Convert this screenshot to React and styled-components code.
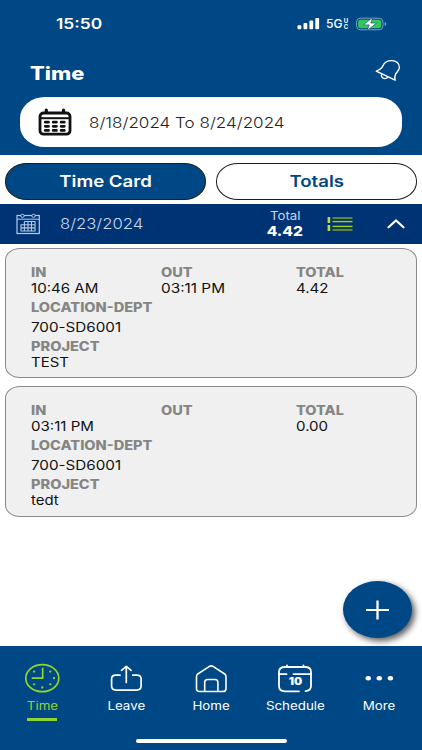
import React from "react";
import styled, { createGlobalStyle } from "styled-components";

// Time entries for the open day
const entries = [
  { in: "10:46 AM", out: "03:11 PM", total: "4.42", location: "700-SD6001", project: "TEST" },
  { in: "03:11 PM", out: "", total: "0.00", location: "700-SD6001", project: "tedt" },
];

const colors = {
  blue: "#004785",
  navy: "#003374",
  green: "#8fd431",
  label: "#858585",
};

const GlobalStyle = createGlobalStyle`
  * {
    box-sizing: border-box;
  }

  body {
    margin: 0;
    background: #fff;
    font-family: Inter, "Liberation Sans", sans-serif;
  }

  button {
    font-family: inherit;
    border: none;
    padding: 0;
    background: none;
    cursor: pointer;
  }

  svg {
    display: block;
    flex: none;
  }
`;

// Styled components
const Screen = styled.div`
  display: flex;
  flex-direction: column;
  width: 422px;
  height: 750px;
  overflow: hidden;
`;

// Wide lettering, used for every text on the screen
const Wide = styled.span`
  display: block;
  white-space: nowrap;
  transform: scaleX(${(props) => props.$wide || 1.2});
  transform-origin: ${(props) => props.$origin || "left"} center;
`;

const Header = styled.header`
  height: 155px;
  background: ${colors.blue};
  color: #fff;
`;

const StatusBar = styled.div`
  display: flex;
  align-items: center;
  justify-content: space-between;
  height: 47px;
  padding: 0 35px 0 56px;
`;

const Clock = styled(Wide)`
  font-size: 14.5px;
  font-weight: 600;
  line-height: 18px;
`;

const StatusIcons = styled.div`
  display: flex;
  align-items: center;
`;

const Network = styled.div`
  display: flex;
  align-items: center;
  width: 24px;
  margin: 1px 6px 0;
  font-size: 11.5px;
  font-weight: 500;
`;

const NetworkSub = styled.div`
  display: flex;
  flex-direction: column;
  margin-left: 2px;
  font-size: 6px;
  font-weight: 700;
  line-height: 6px;
`;

const TitleRow = styled.div`
  display: flex;
  justify-content: space-between;
  height: 50px;
  padding: 12px 21px 0 30px;
`;

const Title = styled(Wide)`
  font-size: 18.5px;
  font-weight: 800;
  line-height: 28px;
`;

const DateRange = styled.div`
  display: flex;
  align-items: center;
  height: 50px;
  margin: 0 20px;
  padding-left: 18px;
  border-radius: 25px / 21px;
  background: #fff;
  color: #222;
  font-size: 14.5px;
  font-weight: 300;

  svg {
    margin-right: 17px;
  }
`;

const Tabs = styled.div`
  display: grid;
  grid-template-columns: 1fr 1fr;
  gap: 10px;
  height: 49px;
  padding: 8px 5px 4px;
`;

const Tab = styled.button`
  display: flex;
  align-items: center;
  justify-content: center;
  border: 1px solid #1c1c1c;
  border-radius: 22px / 18px;
  background: ${(props) => (props.$active ? colors.blue : "#fff")};
  color: ${(props) => (props.$active ? "#fff" : colors.blue)};
  font-size: 15.5px;
  font-weight: 600;
`;

const DayBar = styled.div`
  display: flex;
  align-items: center;
  height: 40px;
  padding: 0 17px 0 16px;
  background: ${colors.navy};
  color: #c9d8f0;
`;

const DayDate = styled(Wide)`
  width: 195px;
  margin-left: 20px;
  padding-bottom: 2px;
  font-size: 14.5px;
  font-weight: 300;
`;

const DayTotal = styled.div`
  display: flex;
  flex-direction: column;
  align-items: center;
  width: 60px;
  margin-right: 12px;
  font-size: 11.5px;
  line-height: 15px;

  strong {
    color: #fff;
    font-size: 13.5px;
    font-weight: 800;
  }
`;

const ListButton = styled.button`
  margin-right: auto;
`;

const Entries = styled.main`
  display: flex;
  flex: 1;
  flex-direction: column;
  gap: 8px;
  padding: 4px 5px;
`;

const Card = styled.section`
  height: 130.3px;
  padding: 15.5px 0 0 24.5px;
  border: 1px solid #8b8b8b;
  border-radius: 15px / 12px;
  background: #f0f0f0;
  color: #111;
  font-size: 13px;
  line-height: 16px;
`;

const CardRow = styled.div`
  display: grid;
  grid-template-columns: 130px 135px 1fr;
  height: ${(props) => props.$height}px;
`;

const Label = styled(Wide)`
  height: 15.5px;
  color: ${colors.label};
  font-size: 12.5px;
  font-weight: 800;
  line-height: 15.5px;
`;

const Value = styled(Wide)`
  padding-top: ${(props) => (props.$spaced ? 4 : 0)}px;
`;

const AddButton = styled.button`
  position: absolute;
  left: 343px;
  top: 581px;
  display: flex;
  align-items: center;
  justify-content: center;
  width: 69px;
  height: 57px;
  border-radius: 50%;
  background: ${colors.blue};
  box-shadow: 3px 3px 6px rgba(0, 0, 0, 0.65);
`;

const BottomBar = styled.footer`
  display: flex;
  flex-direction: column;
  align-items: center;
  height: 104px;
  background: ${colors.blue};
`;

const Nav = styled.nav`
  display: grid;
  grid-template-columns: repeat(5, 84.3px);
  width: 422px;
  height: 92px;
`;

const NavItem = styled.button`
  display: flex;
  flex-direction: column;
  align-items: center;
  padding-top: 16px;
  color: ${(props) => (props.$active ? colors.green : "#fff")};
  font-size: 11.5px;
  line-height: 16px;

  &::after {
    content: "";
    flex: none;
    width: 30px;
    height: 3px;
    margin-top: 4.5px;
    background: ${(props) => (props.$active ? colors.green : "transparent")};
  }
`;

const NavLabel = styled(Wide)`
  margin-top: 3.5px;
`;

const HomeIndicator = styled.div`
  width: 151px;
  height: 4px;
  margin-top: 1px;
  border-radius: 2px;
  background: #fff;
`;

// Icons
const SignalIcon = () => (
  <svg width="23" height="12" viewBox="0 0 23 12" fill="#fff">
    <rect x="0.5" y="7.3" width="3.8" height="3.9" rx="1" />
    <rect x="6.5" y="5" width="3.8" height="6.2" rx="1" />
    <rect x="12.4" y="2.5" width="3.8" height="8.7" rx="1" />
    <rect x="18.3" y="0" width="3.8" height="11.2" rx="1" />
  </svg>
);

const BatteryIcon = () => (
  <svg width="31" height="14" viewBox="0 0 31 14">
    <rect x="0.5" y="1.2" width="26.5" height="11.6" rx="4" fill="none" stroke="#7aa0c4" />
    <rect x="2.1" y="2.7" width="23.2" height="8.6" rx="2.7" fill="#35c759" />
    <path d="M28.6 5v4c1.2-.4 1.6-1 1.6-2s-.4-1.6-1.6-2z" fill="#7aa0c4" />
    <path d="M16.6.6 7.4 7.9h5.8l-2 5.6 9.4-7.4h-5.7z" fill="#fff" stroke={colors.blue} strokeWidth="0.6" />
  </svg>
);

const BellIcon = () => (
  <svg width="26" height="23" viewBox="0 0 26 23" fill="none" stroke="#fff" strokeWidth="1.4" strokeLinejoin="round">
    <path d="M1.2 12.2C5 10.6 6.9 9.4 7.8 7 9.2 3.500 12.800 1.600 16.800 1.600c4.500 0 7.700 3 7.600 7-.1 2.700-2.500 4.300-3.800 6.600-.9 1.700-1 3.600-.5 6z" />
    <path d="M6.600 15.200c-.6 2.300.6 4.300 3 4.400 1.600 0 2.700-.7 3.300-1.900" />
  </svg>
);

const CalendarIcon = () => (
  <svg width="34" height="28" viewBox="0 0 34 28">
    <path d="M8.3 2v4M25.5 2v4" stroke="#111" strokeWidth="3.2" strokeLinecap="round" />
    <rect x="2" y="5" width="30" height="21.2" rx="3.5" fill="#fff" stroke="#111" strokeWidth="2.8" />
    <path d="M2 10.2h30" stroke="#111" strokeWidth="2" />
    <g stroke="#111" strokeWidth="2.8" strokeLinecap="round">
      <path d="M7.3 14.2h3.2M15.2 14.2h3.2M23.1 14.2h3.2" />
      <path d="M7.3 18.3h3.2M15.2 18.3h3.2M23.1 18.3h3.2" />
      <path d="M7.3 22.4h3.2M15.2 22.4h3.2M23.1 22.4h3.2" />
    </g>
  </svg>
);

const DayIcon = () => (
  <svg width="24" height="22" viewBox="0 0 24 22" fill="none" stroke="#b5c9e6">
    <rect x="1" y="2.5" width="22.3" height="18" strokeWidth="1.2" />
    <path d="M1 6.2h22" />
    <ellipse cx="6.5" cy="2.8" rx="1.7" ry="1.6" fill={colors.navy} />
    <ellipse cx="17.500" cy="2.8" rx="1.7" ry="1.6" fill={colors.navy} />
    <path d="M8.4 8.5H19V18H5v-6.300h14M5 14.900h14M8.400 8.500V18M12 8.500V18M15.500 8.500V18" strokeWidth="1.1" />
  </svg>
);

const ListIcon = () => (
  <svg width="26" height="16" viewBox="0 0 26 16" fill="none">
    <path d="M5.5 3.9h20M5.5 12.2h20" stroke="#174431" strokeWidth="3" />
    <path d="M5.5 2h20M5.5 5.7h20M5.5 10.3h20M5.5 14h20" stroke="#a5cf2c" strokeWidth="1.2" />
    <path d="M1.9 1v6M1.9 9v6" stroke="#c3d93a" strokeWidth="2.6" />
  </svg>
);

const ChevronIcon = () => (
  <svg width="18" height="10" viewBox="0 0 18 10" fill="none" stroke="#fff" strokeWidth="2.2" strokeLinecap="round">
    <path d="m1.5 8.2 7.500-6.700 7.500 6.700" />
  </svg>
);

const PlusIcon = () => (
  <svg width="24" height="20" viewBox="0 0 24 20" stroke="#fff">
    <path d="M0 10h23" strokeWidth="2" />
    <path d="M11.500.5v19" strokeWidth="2.3" />
  </svg>
);

const TimeIcon = () => (
  <svg width="36" height="32" viewBox="0 0 36 32" fill="none" stroke={colors.green} strokeWidth="1.7">
    <ellipse cx="18.3" cy="16.2" rx="16.5" ry="13.5" />
    <path d="M18.700 5.800v10.400H7.800" />
    <path
      d="M10.100 9.600h.01M26.300 9.600h.01M30 16.200h.01M26.300 22.300h.01M18.300 25.500h.01M10.100 22.300h.01"
      strokeWidth="2.3"
      strokeLinecap="round"
    />
  </svg>
);

const LeaveIcon = () => (
  <svg width="36" height="32" viewBox="0 0 36 32" fill="none" stroke="#fff" strokeWidth="1.7" strokeLinecap="round" strokeLinejoin="round">
    <path d="M12 13.200H7.900c-3 0-4.300 1.400-4.300 3.600v7.300c0 2.600 1.400 4 4.500 4h20.500c3.100 0 4.500-1.400 4.500-4v-7.300c0-2.200-1.300-3.600-4.300-3.600h-4" />
    <path d="M18.300 20.500V4.500M13.500 8.300l4.800-4 4.800 4" />
  </svg>
);

const HomeIcon = () => (
  <svg width="36" height="32" viewBox="0 0 36 32" fill="none" stroke="#fff" strokeWidth="1.6" strokeLinejoin="round">
    <path d="M3.500 14.400c0-1 .4-1.700 1.300-2.400L16 4.600c1.500-1 2.900-1 4.400 0L31.700 12c.9.700 1.300 1.400 1.300 2.400v12c0 2-1 3.100-3.200 3.100H6.700c-2.200 0-3.200-1.100-3.200-3.100z" />
    <path d="M11.700 29.500V20.300c0-2 1-2.800 3-2.800h7.200c2 0 3 .8 3 2.800v9.200" />
  </svg>
);

const Ten = styled.text`
  font-family: Inter, sans-serif;
  font-size: 10px;
  font-weight: 900;
`;

const ScheduleIcon = () => (
  <svg width="36" height="32" viewBox="0 0 36 32" fill="none" stroke="#fff" strokeWidth="1.8" strokeLinecap="round">
    <path d="M22 29.300H8c-4 0-6-1.600-6-5V10c0-3.400 2-5 6-5h20c4 0 6 1.600 6 5v14c0 3.200-1.500 4.800-5.500 5.200M10 3.500v1.700M26.500 3.500v1.700" />
    <path d="M2 12.200h7.500M16.500 12.200H34" />
    <Ten x="16" y="23.3" textAnchor="middle" transform="scale(1.15 1)" fill="#fff" stroke="none">
      10
    </Ten>
  </svg>
);

const MoreIcon = () => (
  <svg width="36" height="32" viewBox="0 0 36 32" fill="#fff">
    <ellipse cx="7.2" cy="16.3" rx="2.7" ry="2.2" />
    <ellipse cx="18.3" cy="16.3" rx="2.7" ry="2.2" />
    <ellipse cx="29.400" cy="16.3" rx="2.7" ry="2.2" />
  </svg>
);

const navItems = [
  { label: "Time", Icon: TimeIcon },
  { label: "Leave", Icon: LeaveIcon },
  { label: "Home", Icon: HomeIcon },
  { label: "Schedule", Icon: ScheduleIcon },
  { label: "More", Icon: MoreIcon },
];

const EntryCard = ({ entry }) => (
  <Card>
    <CardRow $height={35}>
      <div>
        <Label $wide={1.16}>IN</Label>
        <Value $wide={1.16}>{entry.in}</Value>
      </div>
      <div>
        <Label $wide={1.16}>OUT</Label>
        <Value $wide={1.18}>{entry.out}</Value>
      </div>
      <div>
        <Label $wide={1.16}>TOTAL</Label>
        <Value $wide={1.16}>{entry.total}</Value>
      </div>
    </CardRow>
    <CardRow $height={39}>
      <div>
        <Label $wide={1.165}>LOCATION-DEPT</Label>
        <Value $spaced $wide={1.17}>
          {entry.location}
        </Value>
      </div>
    </CardRow>
    <CardRow $height={32}>
      <div>
        <Label $wide={1.165}>PROJECT</Label>
        <Value $wide={1.15}>{entry.project}</Value>
      </div>
    </CardRow>
  </Card>
);

// Main Component
const App = () => {
  return (
    <>
      <GlobalStyle />
      <Screen>
        <Header>
          <StatusBar>
            <Clock>15:50</Clock>
            <StatusIcons>
              <SignalIcon />
              <Network>
                <Wide $wide={1.05}>5G</Wide>
                <NetworkSub>
                  <span>U</span>
                  <span>C</span>
                </NetworkSub>
              </Network>
              <BatteryIcon />
            </StatusIcons>
          </StatusBar>
          <TitleRow>
            <Title $wide={1.18}>Time</Title>
            <BellIcon />
          </TitleRow>
          <DateRange>
            <CalendarIcon />
            <Wide $wide={1.175}>8/18/2024 To 8/24/2024</Wide>
          </DateRange>
        </Header>
        <Tabs>
          <Tab $active>
            <Wide $origin="center">Time Card</Wide>
          </Tab>
          <Tab>
            <Wide $origin="center">Totals</Wide>
          </Tab>
        </Tabs>
        <DayBar>
          <DayIcon />
          <DayDate $wide={1.15}>8/23/2024</DayDate>
          <DayTotal>
            <Wide $origin="center" $wide={1.15}>
              Total
            </Wide>
            <Wide as="strong" $origin="center" $wide={1.15}>
              4.42
            </Wide>
          </DayTotal>
          <ListButton>
            <ListIcon />
          </ListButton>
          <ChevronIcon />
        </DayBar>
        <Entries>
          {entries.map((entry, index) => (
            <EntryCard key={index} entry={entry} />
          ))}
        </Entries>
        <BottomBar>
          <Nav>
            {navItems.map(({ label, Icon }) => (
              <NavItem key={label} $active={label === "Time"}>
                <Icon />
                <NavLabel $origin="center" $wide={1.16}>
                  {label}
                </NavLabel>
              </NavItem>
            ))}
          </Nav>
          <HomeIndicator />
        </BottomBar>
        <AddButton>
          <PlusIcon />
        </AddButton>
      </Screen>
    </>
  );
};

export default App;
